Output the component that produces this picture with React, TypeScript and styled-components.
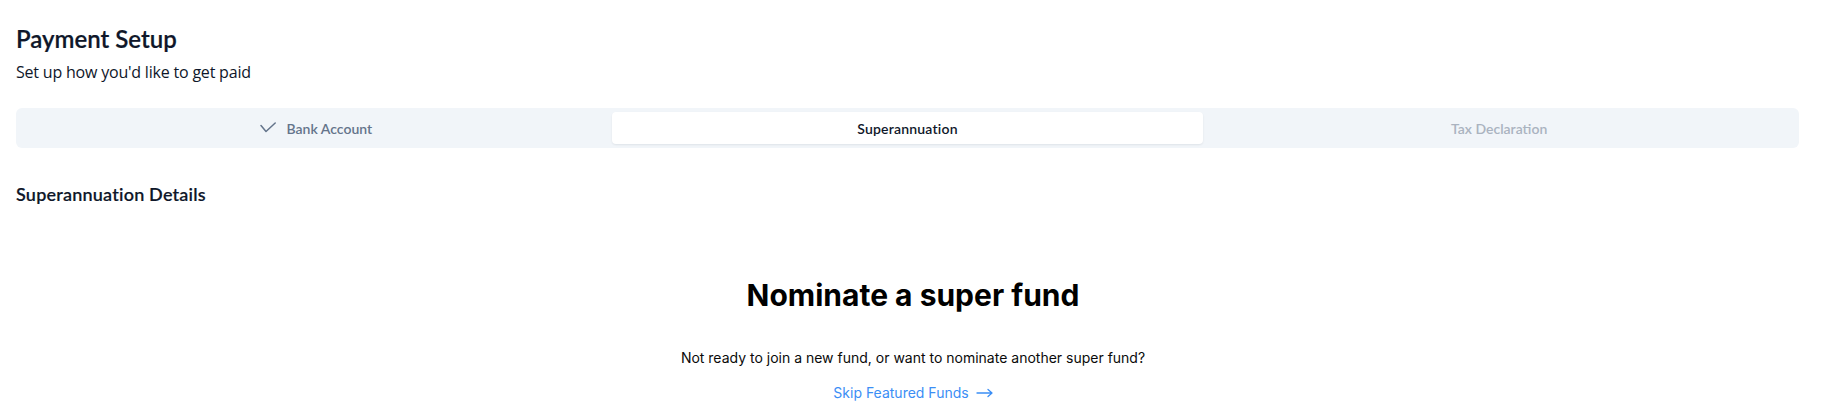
import React from "react";
import styled, { createGlobalStyle } from "styled-components";

const GlobalStyle = createGlobalStyle`
  html, body { margin: 0; padding: 0; background: #ffffff; }
  body { font-family: Lato, "Open Sans", sans-serif; -webkit-font-smoothing: antialiased; }
  * { box-sizing: border-box; }
`;

const Page = styled.div`
  padding: 23px 22px 0 16px;
  display: flex;
  flex-direction: column;
`;

const Header = styled.header`
  display: flex;
  flex-direction: column;
  gap: 5px;
`;

const Title = styled.h1`
  margin: 0;
  font-size: 24px;
  line-height: 32px;
  font-weight: 600;
  color: #0f172a;
  -webkit-text-stroke: 0.2px #0f172a;
`;

const Subtitle = styled.p`
  margin: 0;
  font-family: "Open Sans", "Noto Sans", sans-serif;
  font-size: 16px;
  line-height: 24px;
  font-weight: 400;
  letter-spacing: -0.2px;
  color: #0f172a;
`;

const TabList = styled.div`
  margin-top: 24px;
  display: grid;
  grid-template-columns: repeat(3, 1fr);
  height: 40px;
  padding: 4px;
  background: #f1f5f9;
  border-radius: 6px;
`;

type TabState = "done" | "active" | "disabled";

const Tab = styled.button<{ $state: TabState }>`
  all: unset;
  display: flex;
  align-items: center;
  justify-content: center;
  gap: 11px;
  height: 32px;
  border-radius: 4px;
  font-family: Lato, "Open Sans", sans-serif;
  font-size: 14px;
  font-weight: 600;
  letter-spacing: ${(p) => (p.$state === "active" ? "0.2px" : "0")};
  background: ${(p) => (p.$state === "active" ? "#ffffff" : "transparent")};
  box-shadow: ${(p) =>
    p.$state === "active" ? "0 1px 2px rgba(15, 23, 42, 0.08)" : "none"};
  color: ${(p) =>
    p.$state === "active" ? "#0f172a" : p.$state === "done" ? "#64748b" : "#aab3c0"};
`;

const Section = styled.section`
  margin-top: 32px;
  display: flex;
  flex-direction: column;
`;

const SectionTitle = styled.h2`
  margin: 0;
  font-size: 18px;
  line-height: 28px;
  font-weight: 600;
  letter-spacing: 0.2px;
  color: #0f172a;
  -webkit-text-stroke: 0.15px #0f172a;
`;

const Nominate = styled.div`
  margin-top: 69px;
  padding-left: 11px;
  display: flex;
  flex-direction: column;
  align-items: center;
  font-family: Inter, "Liberation Sans", sans-serif;
`;

const NominateTitle = styled.h3`
  margin: 0;
  font-size: 30px;
  line-height: 36px;
  font-weight: 700;
  color: #000000;
`;

const NominateText = styled.p`
  margin: 35px 0 0;
  font-size: 14px;
  line-height: 20px;
  color: #0a0a0a;
`;

const SkipLink = styled.a`
  margin-top: 15px;
  display: inline-flex;
  align-items: center;
  gap: 7px;
  font-size: 14px;
  line-height: 20px;
  color: #3b8ef5;
  text-decoration: none;
  cursor: pointer;
`;

const Check = () => (
  <svg width="16" height="12" viewBox="0 0 16 12" fill="none" stroke="currentColor" strokeWidth="1.5" strokeLinecap="round" strokeLinejoin="round">
    <path d="M1 3.5 6 9.5 15.2 1" />
  </svg>
);

const LongArrow = () => (
  <svg width="17" height="10" viewBox="0 0 17 10" fill="none" stroke="currentColor" strokeWidth="1.3" strokeLinecap="round" strokeLinejoin="round">
    <path d="M1 5h15M12 1.5 16 5l-4 3.5" />
  </svg>
);

export default function App() {
  return (
    <>
      <GlobalStyle />
      <Page>
        <Header>
          <Title>Payment Setup</Title>
          <Subtitle>Set up how you'd like to get paid</Subtitle>
        </Header>
        <TabList>
          <Tab $state="done">
            <Check />
            Bank Account
          </Tab>
          <Tab $state="active">Superannuation</Tab>
          <Tab $state="disabled">Tax Declaration</Tab>
        </TabList>
        <Section>
          <SectionTitle>Superannuation Details</SectionTitle>
          <Nominate>
            <NominateTitle>Nominate a super fund</NominateTitle>
            <NominateText>
              Not ready to join a new fund, or want to nominate another super fund?
            </NominateText>
            <SkipLink>
              Skip Featured Funds
              <LongArrow />
            </SkipLink>
          </Nominate>
        </Section>
      </Page>
    </>
  );
}
